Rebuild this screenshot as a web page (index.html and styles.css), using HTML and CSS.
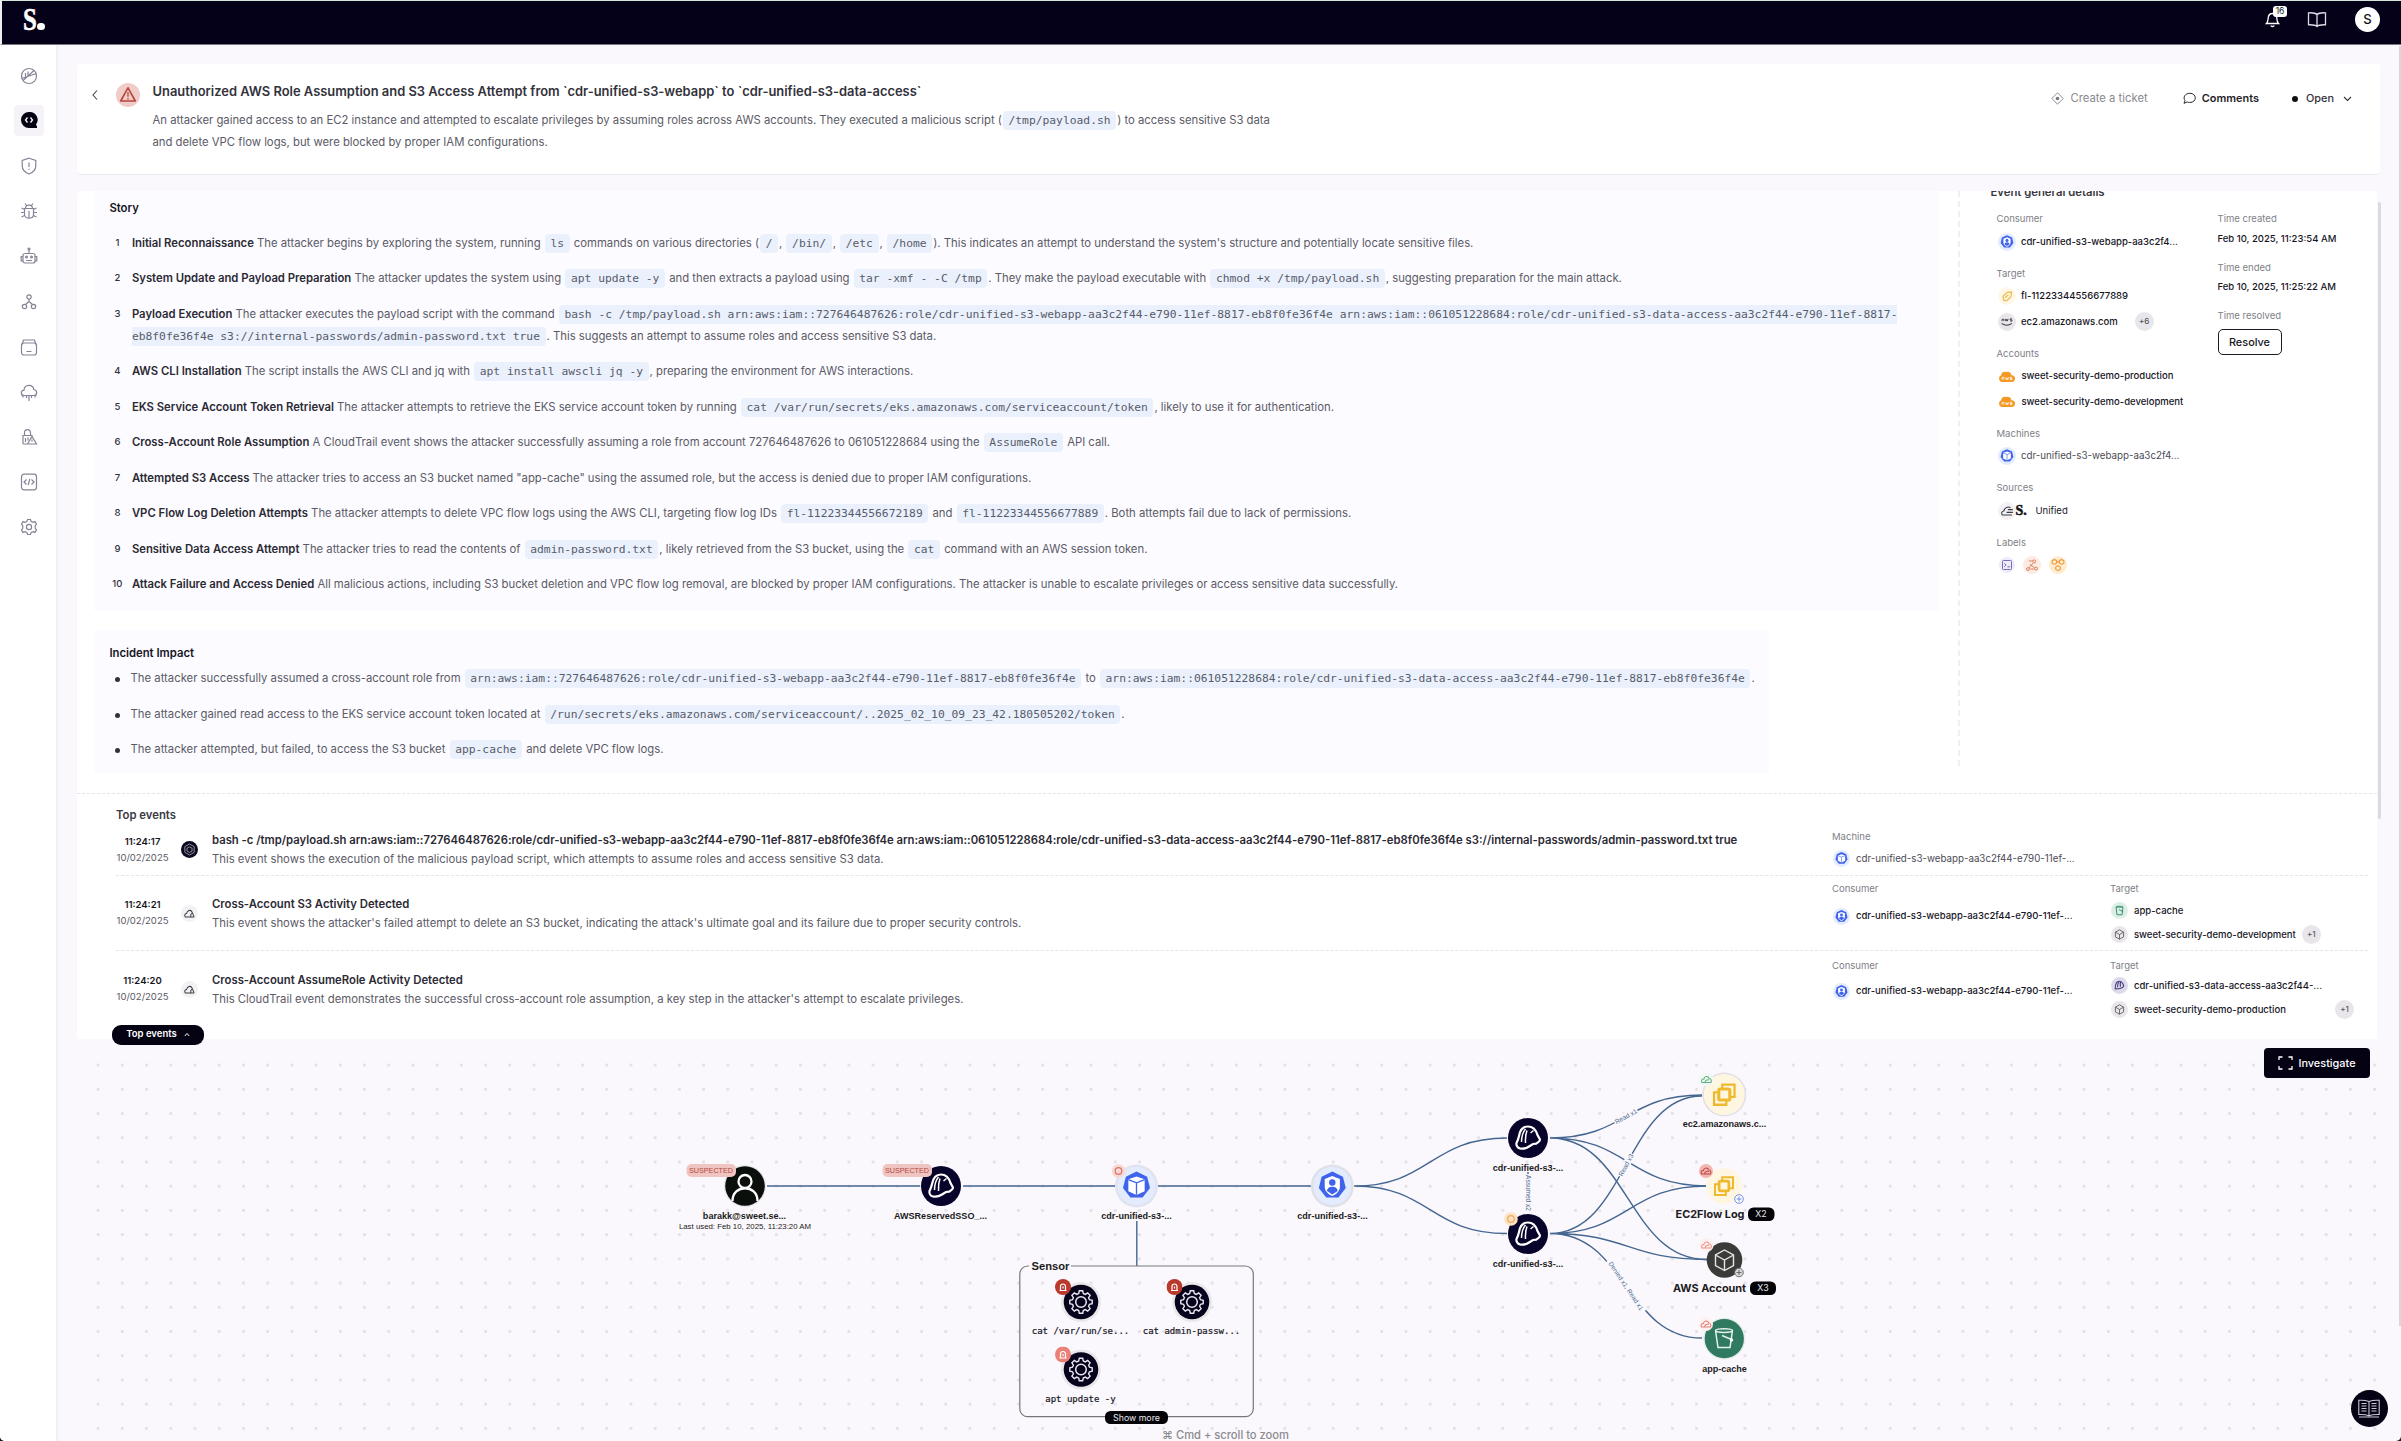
FILE: index.html
```html
<!DOCTYPE html>
<html lang="en">
<head>
<meta charset="utf-8">
<title>Sweet Security - Incident</title>
<link rel="stylesheet" href="styles.css">
</head>
<body>
<svg class="sprite" aria-hidden="true">
  <symbol id="i-user" viewBox="0 0 20 20"><circle cx="10" cy="10" r="10" fill="#e3ebff"/><path d="M10 2.400l5.600 2.700 1.500 6-3.900 5H6.800l-3.900-5 1.500-6z" fill="#3f63ea"/><path d="M10 4.800l4 1.500v4c0 2.500-1.800 4-4 5-2.200-1-4-2.500-4-5v-4z" fill="#fff"/><circle cx="10" cy="8.200" r="1.700" fill="#3f63ea"/><path d="M7.200 12.600c0-3 5.600-3 5.600 0L10 14.500z" fill="#3f63ea"/></symbol>
  <symbol id="i-pod" viewBox="0 0 20 20"><circle cx="10" cy="10" r="10" fill="#e3ebff"/><path d="M10 2.400l5.600 2.700 1.500 6-3.900 5H6.800l-3.900-5 1.500-6z" fill="#3f63ea"/><path d="M10 5l4.300 1.500v6.200L10 14.800l-4.300-2.100V6.500z" fill="#fff"/><path d="M5.700 6.700L10 8.300l4.300-1.600M10 8.300v6.300" fill="none" stroke="#3f63ea" stroke-width=".7"/></symbol>
  <symbol id="i-ec2" viewBox="0 0 20 20"><circle cx="10" cy="10" r="10" fill="#fff6e2"/><g fill="none" stroke="#efb92e" stroke-width="1.100"><rect x="7.300" y="7.300" width="5.400" height="5.400" rx=".8" stroke-width="1.500"/><path d="M9 7V5.200h6v6h-2M7 9H5v6h6v-2"/></g></symbol>
  <symbol id="i-tag" viewBox="0 0 20 20"><circle cx="10" cy="10" r="10" fill="#fff8e8"/><path d="M5.500 10.500l4.500-4.500 5-.5-.5 5-4.500 4.500-3.500 0z" fill="none" stroke="#ecc25c" stroke-width="1.600"/><path d="M8 12l3.500-3.500" stroke="#ecc25c" stroke-width="1.600"/></symbol>
  <symbol id="i-aws" viewBox="0 0 20 20"><circle cx="10" cy="10" r="10" fill="#e8e6ea"/><path d="M4.500 9V7h2v2M8 6.500l.8 2.500.8-2 .8 2 .8-2.500M15.500 6.500h-2v1.200h2V9h-2" fill="none" stroke="#3a3940" stroke-width="1"/><path d="M4 11.500c3.500 2.500 8 2.500 11.500 0" fill="none" stroke="#3a3940" stroke-width="1.200"/></symbol>
  <symbol id="i-cloud-aws" viewBox="0 0 20 12"><path d="M4 12a4 4 0 0 1-.5-7.500A4 4 0 0 1 9 1a5 5 0 0 1 6 3.500A3.800 3.800 0 0 1 16 12z" fill="#f39a26"/><path d="M4.500 9.500V7h2v2.500M8.500 7l.8 2.500.8-2 .8 2 .8-2.500M15.500 7h-2v1.200h2v1.300h-2" fill="none" stroke="#fff" stroke-width=".9"/></symbol>
  <symbol id="i-bucket" viewBox="0 0 20 20"><circle cx="10" cy="10" r="10" fill="#dcefe6"/><path d="M6 6h8l-1 9H7zM6 6c0-1.300 8-1.300 8 0M9.500 9l5 2.500" fill="none" stroke="#2f8a66" stroke-width="1.100"/></symbol>
  <symbol id="i-cube" viewBox="0 0 20 20"><circle cx="10" cy="10" r="10" fill="#e9e7ea"/><path d="M10 4.500l4.800 2.700v5.600L10 15.500l-4.800-2.700V7.200zM5.200 7.200L10 10l4.800-2.800M10 10v5.500" fill="none" stroke="#57565c" stroke-width="1"/></symbol>
  <symbol id="i-role" viewBox="0 0 20 20"><circle cx="10" cy="10" r="10" fill="#dddae9"/><path d="M5 14c0-4 1-9 4.500-9 3 0 4.500 2 5.500 5.500-1 2-3.500 3.500-10 3.500zM9 6c-1 2-1.300 4-1.300 6M11 5.500v6" fill="none" stroke="#4b4585" stroke-width="1.400"/></symbol>
  <symbol id="i-trail" viewBox="0 0 20 20"><circle cx="10" cy="10" r="10" fill="#f3f1f4"/><path d="M15.500 14H5c-1.500-2 0-4 1.500-4C7.500 6 11 5.500 12.500 7.500l3 6.500M11.500 14c-.5-2 0-3.500 1.500-4.500" fill="none" stroke="#3d3c42" stroke-width="1.200"/></symbol>
  <symbol id="i-source" viewBox="0 0 20 20"><circle cx="10" cy="10" r="10" fill="#f3f1f4"/><path d="M15.500 14.500H5c-2-2-.500-4.500 1.500-4.500C7.500 6 11 4.500 14 6.500M16.500 8.500H11M16.500 11.500H9.500" fill="none" stroke="#3d3c42" stroke-width="1.200"/></symbol>
  <symbol id="i-badge-cloud" viewBox="0 0 16 16"><path d="M3 11.500c-1.500-2 0-4.500 2-4C5.500 4 10 3.500 11 6.800c2.300 0 3.300 2.700 2 4.700zM6.500 11c0-2 2-3 4.500-2.500" fill="none" stroke="currentColor" stroke-width="1.200"/></symbol>
  <symbol id="i-hat" viewBox="0 0 40 40"><circle cx="20" cy="20" r="20" fill="#07032a"/><path d="M8.500 25c1-2 2-4.500 2.500-7C12 12.500 15 8.500 20 8.500c5.500 0 8 3.500 9.500 8.500l2.500 4.500c0 1.500-2 3-4 4.200l-3 .3-4 2.500c-3 2-6 2.500-9 2-2.500-.500-4-3-3.500-5.500z" fill="none" stroke="#fff" stroke-width="2.200"/><path d="M13.500 24c0-6 1.500-10 4-13M17.500 25c-.3-5 .2-9 1.500-12.500M22.500 15l3-2.500" fill="none" stroke="#fff" stroke-width="1.500"/></symbol>
  <symbol id="i-gearnode" viewBox="0 0 40 40"><circle cx="20" cy="20" r="20" fill="#e9e7ea"/><circle cx="20" cy="20" r="17.300" fill="#07031c"/><g fill="none" stroke="#e8e8f0"><circle cx="20" cy="20" r="5.300" stroke-width="1.500"/><path d="M18.300 10h3.400l.6 2.700 2 .9 2.400-1.500 2.400 2.400-1.500 2.400.9 2 2.700.6v3.400l-2.700.6-.9 2 1.500 2.400-2.400 2.400-2.400-1.500-2 .9-.6 2.700h-3.400l-.6-2.700-2-.9-2.400 1.500-2.400-2.400 1.500-2.400-.9-2-2.700-.6v-3.400l2.700-.6.9-2-1.500-2.400 2.400-2.400 2.400 1.500 2-.9z" stroke-width="1.400" transform="translate(0 -1.200)"/></g></symbol>
  <symbol id="i-alarm" viewBox="0 0 16 16"><circle cx="8" cy="8" r="8" fill="currentColor"/><path d="M4.500 11.500h7M5.500 11V7.500a2.500 2.500 0 0 1 5 0V11M8 7.500v2" fill="none" stroke="#fff" stroke-width="1.200"/></symbol>
</svg>

<div class="app">
  <header class="topbar">
    <div class="logo"><span class="logo-s">S</span><i class="logo-dot"></i></div>
    <div class="topbar-actions">
      <div class="bell">
        <svg width="15" height="17" viewBox="0 0 15 17" fill="none" stroke="#fff" stroke-width="1.300"><path d="M1.500 12.500c1.500-1.500 1.500-3 1.700-5.500C3.400 4 5 2.500 7.500 2.500S11.600 4 11.800 7c.2 2.500.2 4 1.700 5.500zM5.800 14.500c.5 1.300 2.900 1.300 3.400 0"/></svg>
        <span class="bell-count">16</span>
      </div>
      <svg width="20" height="17" viewBox="0 0 20 17" fill="none" stroke="#dcdce4" stroke-width="1.300"><path d="M10 3.500C8.500 2 6 1.500 1.500 1.800v12c4.500-.2 7 .2 8.500 1.700 1.500-1.500 4-1.900 8.500-1.700v-12C14 1.500 11.500 2 10 3.500zM10 3.500v12"/></svg>
      <div class="avatar">S</div>
    </div>
  </header>

  <div class="shell">
    <nav class="sidebar">
      <a class="nav-item"><svg viewBox="0 0 18 18"><circle cx="9" cy="9" r="7.500"/><path d="M1.500 11.500L16.500 6.500M3 13.500L14 3.500M5.500 6v3.500M8 4.500v3.800"/></svg></a>
      <a class="nav-item active"><span class="nav-tile"><svg viewBox="0 0 18 18"><path d="M9 1a7.800 7.800 0 1 0 0 16h8v-1.500l-1-2A7.800 7.800 0 0 0 9 1z" fill="#050214" stroke="none"/><path d="M7.500 6.500L5.500 9l2 2.500M10.500 6.500l2 2.500-2 2.500" stroke="#fff" stroke-width="1.300"/></svg></span></a>
      <a class="nav-item"><svg viewBox="0 0 18 18"><path d="M9 1.200l6.800 2.300v5.300c0 4-2.800 6.700-6.800 8.200-4-1.500-6.800-4.200-6.800-8.200V3.500zM9 5.500v4.500M9 11.800v1.200"/></svg></a>
      <a class="nav-item"><svg viewBox="0 0 18 18"><path d="M4.500 6.500h9v6c0 5-9 5-9 0zM5.500 6.500c0-4.500 7-4.500 7 0M9 9v7M1.500 6l3 1.500M16.500 6l-3 1.500M1 10.500h3.500M17 10.500h-3.500M1.500 15l3-1.500M16.500 15l-3-1.500M5 1.500l1.500 2M13 1.500l-1.500 2"/></svg></a>
      <a class="nav-item"><svg viewBox="0 0 18 18"><rect x="3" y="6.500" width="12" height="9.500" rx="2"/><path d="M9 6.500V2.500M3 9.500H1.200V14H3M15 9.500h1.800V14H15M6 13.500h6"/><circle cx="9" cy="2" r="1"/><circle cx="6.500" cy="10" r=".9"/><circle cx="11.500" cy="10" r=".9"/></svg></a>
      <a class="nav-item"><svg viewBox="0 0 18 18"><circle cx="9" cy="4" r="2.200"/><circle cx="4.500" cy="13.500" r="2.200"/><circle cx="13.500" cy="13.500" r="2.200"/><path d="M9 6.200v2.300L5.500 11.500M9 8.500l3.500 3"/></svg></a>
      <a class="nav-item"><svg viewBox="0 0 18 18"><rect x="1.500" y="5" width="15" height="12" rx="2.500"/><path d="M2 6.500L3.500 2h11L16 6.500M6.500 13.500h5"/></svg></a>
      <a class="nav-item"><svg viewBox="0 0 18 18"><path d="M4 12.500C.5 12 .5 7.500 4 7.200 4.500 1 13 1 13.700 6.500c4 .5 3.800 5.500.3 6M1.500 12.500h15M3 12.500v2M6.500 12.500V15M9 12.500V18M11.500 12.500V15M15 12.500v2" /></svg></a>
      <a class="nav-item"><svg viewBox="0 0 18 18"><path d="M3 16V7.500h9V10M4.500 7.500V5c0-4.500 6-4.500 6 0v2.500M3 16h13.500L12 8.500 7.500 16M12 11.500v2M5.500 10v4M8 9.500v3" /></svg></a>
      <a class="nav-item"><svg viewBox="0 0 18 18"><rect x="1.500" y="1.200" width="15" height="15.600" rx="2.500"/><path d="M6.500 6.500L4 9l2.500 2.500M11.500 6.500L14 9l-2.500 2.500M9.800 6L8.200 12"/></svg></a>
      <a class="nav-item"><svg viewBox="0 0 18 18"><circle cx="9" cy="9" r="2.600"/><path d="M7.500 1.500h3l.6 2 2 .8L15 3.600l1.500 2.600-1.300 1.500v2.600l1.300 1.500L15 14.400l-1.900-.7-2 .8-.6 2h-3l-.6-2-2-.8-1.900.7-1.500-2.600 1.300-1.500V7.700L1.500 6.200 3 3.600l1.900.7 2-.8z"/></svg></a>
    </nav>

    <main class="main">
      <section class="incident-head">
        <svg class="back" viewBox="0 0 8 12"><path d="M6 1.500L2 6l4 4.500" fill="none" stroke="#444" stroke-width="1.100"/></svg>
        <svg class="severity" viewBox="0 0 24 24"><circle cx="12" cy="12" r="12" fill="#f0cbc8"/><path d="M12 4.800l7.300 13.200H4.700z" fill="none" stroke="#b5473b" stroke-width="1.600" stroke-linejoin="round"/><path d="M12 9.300v4.500M12 15v1.400" stroke="#b5473b" stroke-width="1.300"/></svg>
        <div class="incident-text">
          <h1>Unauthorized AWS Role Assumption and S3 Access Attempt from `cdr-unified-s3-webapp` to `cdr-unified-s3-data-access`</h1>
          <p>An attacker gained access to an EC2 instance and attempted to escalate privileges by assuming roles across AWS accounts. They executed a malicious script (<code>/tmp/payload.sh</code>) to access sensitive S3 data<br>and delete VPC flow logs, but were blocked by proper IAM configurations.</p>
        </div>
        <div class="incident-actions">
          <span class="act muted"><svg width="13" height="13" viewBox="0 0 13 13"><path d="M6.500.8l5.700 5.700-5.700 5.700L.8 6.500z" fill="none" stroke="#8d8c93" stroke-width="1"/><circle cx="6.500" cy="6.500" r="1.800" fill="#77767d"/></svg>Create a ticket</span>
          <span class="act strong"><svg width="13" height="13" viewBox="0 0 13 13"><path d="M6.800 1.300c7.300 0 7.300 9.200 0 9.200-1 0-1.800-.2-2.600-.5L1 11.300 2 8.500C-.3 5.500 2 1.300 6.800 1.300z" fill="none" stroke="#2b2a33" stroke-width="1"/></svg>Comments</span>
          <span class="act status"><i class="status-dot"></i>Open<svg width="9" height="6" viewBox="0 0 9 6"><path d="M1 1l3.500 3.500L8 1" fill="none" stroke="#333" stroke-width="1.100"/></svg></span>
        </div>
      </section>

      <section class="panel">
        <div class="panel-top">
          <div class="narrative">
            <article class="story">
              <h2>Story</h2>
              <ol>
                <li><i>1</i><p><b>Initial Reconnaissance</b> The attacker begins by exploring the system, running <code>ls</code> commands on various directories (<code>/</code>, <code>/bin/</code>, <code>/etc</code>, <code>/home</code>). This indicates an attempt to understand the system's structure and potentially locate sensitive files.</p></li>
                <li><i>2</i><p><b>System Update and Payload Preparation</b> The attacker updates the system using <code>apt update -y</code> and then extracts a payload using <code>tar -xmf - -C /tmp</code>. They make the payload executable with <code>chmod +x /tmp/payload.sh</code>, suggesting preparation for the main attack.</p></li>
                <li><i>3</i><p><b>Payload Execution</b> The attacker executes the payload script with the command <code>bash -c /tmp/payload.sh arn:aws:iam::727646487626:role/cdr-unified-s3-webapp-aa3c2f44-e790-11ef-8817-eb8f0fe36f4e arn:aws:iam::061051228684:role/cdr-unified-s3-data-access-aa3c2f44-e790-11ef-8817-<wbr>eb8f0fe36f4e s3://internal-passwords/admin-password.txt true</code>. This suggests an attempt to assume roles and access sensitive S3 data.</p></li>
                <li><i>4</i><p><b>AWS CLI Installation</b> The script installs the AWS CLI and jq with <code>apt install awscli jq -y</code>, preparing the environment for AWS interactions.</p></li>
                <li><i>5</i><p><b>EKS Service Account Token Retrieval</b> The attacker attempts to retrieve the EKS service account token by running <code>cat /var/run/secrets/eks.amazonaws.com/serviceaccount/token</code>, likely to use it for authentication.</p></li>
                <li><i>6</i><p><b>Cross-Account Role Assumption</b> A CloudTrail event shows the attacker successfully assuming a role from account 727646487626 to 061051228684 using the <code>AssumeRole</code> API call.</p></li>
                <li><i>7</i><p><b>Attempted S3 Access</b> The attacker tries to access an S3 bucket named "app-cache" using the assumed role, but the access is denied due to proper IAM configurations.</p></li>
                <li><i>8</i><p><b>VPC Flow Log Deletion Attempts</b> The attacker attempts to delete VPC flow logs using the AWS CLI, targeting flow log IDs <code>fl-11223344556672189</code> and <code>fl-11223344556677889</code>. Both attempts fail due to lack of permissions.</p></li>
                <li><i>9</i><p><b>Sensitive Data Access Attempt</b> The attacker tries to read the contents of <code>admin-password.txt</code>, likely retrieved from the S3 bucket, using the <code>cat</code> command with an AWS session token.</p></li>
                <li><i>10</i><p><b>Attack Failure and Access Denied</b> All malicious actions, including S3 bucket deletion and VPC flow log removal, are blocked by proper IAM configurations. The attacker is unable to escalate privileges or access sensitive data successfully.</p></li>
              </ol>
            </article>
            <article class="impact">
              <h2>Incident Impact</h2>
              <ul>
                <li>The attacker successfully assumed a cross-account role from <code>arn:aws:iam::727646487626:role/cdr-unified-s3-webapp-aa3c2f44-e790-11ef-8817-eb8f0fe36f4e</code> to <code>arn:aws:iam::061051228684:role/cdr-unified-s3-data-access-aa3c2f44-e790-11ef-8817-eb8f0fe36f4e</code>.</li>
                <li>The attacker gained read access to the EKS service account token located at <code>/run/secrets/eks.amazonaws.com/serviceaccount/..2025_02_10_09_23_42.180505202/token</code>.</li>
                <li>The attacker attempted, but failed, to access the S3 bucket <code>app-cache</code> and delete VPC flow logs.</li>
              </ul>
            </article>
          </div>

          <aside class="details">
            <h2>Event general details</h2>
            <div class="details-cols">
              <div class="fields">
                <div class="field"><label>Consumer</label><span class="val"><svg><use href="#i-user"/></svg>cdr-unified-s3-webapp-aa3c2f4...</span></div>
                <div class="field"><label>Target</label><span class="val"><svg><use href="#i-tag"/></svg>fl-11223344556677889</span><span class="val"><svg><use href="#i-aws"/></svg>ec2.amazonaws.com<em class="more wide">+6</em></span></div>
                <div class="field"><label>Accounts</label><span class="val"><svg class="cloud"><use href="#i-cloud-aws"/></svg>sweet-security-demo-production</span><span class="val"><svg class="cloud"><use href="#i-cloud-aws"/></svg>sweet-security-demo-development</span></div>
                <div class="field"><label>Machines</label><span class="val soft"><svg><use href="#i-pod"/></svg>cdr-unified-s3-webapp-aa3c2f4...</span></div>
                <div class="field"><label>Sources</label><span class="val sources"><svg><use href="#i-source"/></svg><b class="mini-logo">S.</b>Unified</span></div>
                <div class="field"><label>Labels</label><span class="val labels">
                  <svg viewBox="0 0 20 20"><circle cx="10" cy="10" r="9" fill="#eeecfa"/><rect x="5" y="5" width="10" height="10" rx="1" fill="none" stroke="#6a62ae"/><path d="M7 8l2 2-2 2M10.500 12h3" fill="none" stroke="#6a62ae"/></svg>
                  <svg viewBox="0 0 20 20"><circle cx="10" cy="10" r="10" fill="#fdeae2"/><g fill="none" stroke="#d77a55"><circle cx="5.500" cy="14.500" r="1.600"/><circle cx="14.500" cy="14" r="1.600"/><circle cx="12.500" cy="6" r="1.600"/><path d="M6.500 13.500l5-6M6.500 5.500H11M7.500 9.500l5.500 3.500M8 14.500h4.500"/></g></svg>
                  <svg viewBox="0 0 20 20"><circle cx="10" cy="10" r="10" fill="#ffeccf"/><g fill="none" stroke="#eb9a3a" stroke-width="1.200"><path d="M6 3.800l2.500 1.400v2.700L6 9.300 3.500 7.900V5.200zM14 3.800l2.500 1.400v2.700L14 9.300l-2.500-1.400V5.200zM10 10.800l2.500 1.400v2.700L10 16.300l-2.500-1.400v-2.700zM8.500 6.500h3"/></g></svg>
                </span></div>
              </div>
              <div class="times">
                <label>Time created</label><span>Feb 10, 2025, 11:23:54 AM</span>
                <label>Time ended</label><span>Feb 10, 2025, 11:25:22 AM</span>
                <label>Time resolved</label><button class="resolve">Resolve</button>
              </div>
            </div>
          </aside>
          <i class="scroll-thumb"></i>
        </div>

        <div class="events">
          <h2>Top events</h2>
          <div class="event first">
            <div class="when"><b>11:24:17</b><span>10/02/2025</span></div>
            <svg class="ev-icon" viewBox="0 0 20 20"><circle cx="10" cy="10" r="10" fill="#0d0a22"/><path d="M10 3.500l5.500 3.200v6.600L10 16.500l-5.500-3.200V6.700zM10 7l3 1.500v3.300L10 13.500l-3-1.700V8.500z" fill="none" stroke="#a5a4b0" stroke-width="1"/></svg>
            <div class="what"><b>bash -c /tmp/payload.sh arn:aws:iam::727646487626:role/cdr-unified-s3-webapp-aa3c2f44-e790-11ef-8817-eb8f0fe36f4e arn:aws:iam::061051228684:role/cdr-unified-s3-data-access-aa3c2f44-e790-11ef-8817-eb8f0fe36f4e s3://internal-passwords/admin-password.txt true</b><span>This event shows the execution of the malicious payload script, which attempts to assume roles and access sensitive S3 data.</span></div>
            <div class="who"><label>Machine</label><span class="val soft"><svg><use href="#i-pod"/></svg>cdr-unified-s3-webapp-aa3c2f44-e790-11ef-...</span></div>
            <div class="who"></div>
          </div>
          <div class="event">
            <div class="when"><b>11:24:21</b><span>10/02/2025</span></div>
            <svg class="ev-icon"><use href="#i-trail"/></svg>
            <div class="what"><b>Cross-Account S3 Activity Detected</b><span>This event shows the attacker's failed attempt to delete an S3 bucket, indicating the attack's ultimate goal and its failure due to proper security controls.</span></div>
            <div class="who consumer"><label>Consumer</label><span class="val"><svg><use href="#i-user"/></svg>cdr-unified-s3-webapp-aa3c2f44-e790-11ef-...</span></div>
            <div class="who"><label>Target</label><span class="val"><svg><use href="#i-bucket"/></svg>app-cache</span><span class="val"><svg><use href="#i-cube"/></svg>sweet-security-demo-development<em class="more">+1</em></span></div>
          </div>
          <div class="event last">
            <div class="when"><b>11:24:20</b><span>10/02/2025</span></div>
            <svg class="ev-icon"><use href="#i-trail"/></svg>
            <div class="what"><b>Cross-Account AssumeRole Activity Detected</b><span>This CloudTrail event demonstrates the successful cross-account role assumption, a key step in the attacker's attempt to escalate privileges.</span></div>
            <div class="who consumer"><label>Consumer</label><span class="val"><svg><use href="#i-user"/></svg>cdr-unified-s3-webapp-aa3c2f44-e790-11ef-...</span></div>
            <div class="who"><label>Target</label><span class="val"><svg><use href="#i-role"/></svg>cdr-unified-s3-data-access-aa3c2f44-...</span><span class="val"><svg><use href="#i-cube"/></svg>sweet-security-demo-production<em class="more far">+1</em></span></div>
          </div>
          <button class="toggle">Top events<svg width="6" height="5" viewBox="0 0 6 5"><path d="M.8 4L3 1.500 5.200 4" fill="none" stroke="#fff"/></svg></button>
        </div>
      </section>

      <section class="graph">
        <svg class="graph-canvas" viewBox="58 1039 2343 402">
          <g class="edges">
            <path d="M767 1186H920M963 1186H1115M1158 1186H1311" stroke-width="2"/>
            <path d="M1136.800 1221V1266" stroke-width="1.600"/>
            <path d="M1354 1186C1430 1186 1430 1138 1507 1138M1354 1186C1430 1186 1430 1233.500 1507 1233.500"/>
            <path d="M1550 1138C1626 1138 1626 1095 1702 1095M1550 1138C1628 1138 1628 1186 1707 1186M1550 1138C1628 1138 1628 1259.500 1707 1259.500"/>
            <path d="M1550 1233.500C1626 1233.500 1626 1096 1702 1096M1550 1233.500C1628 1233.500 1628 1186 1707 1186M1550 1233.500C1628 1233.500 1628 1259.500 1707 1259.500M1550 1233.500C1626 1233.500 1626 1338 1702 1338"/>
            <path d="M1528 1172V1212"/>
          </g>
          <g class="edge-labels">
            <g transform="translate(1626 1116.500) rotate(-29)"><rect x="-13" y="-4" width="26" height="8"/><text y="2.200">Read x1</text></g>
            <g transform="translate(1626 1165) rotate(-62)"><rect x="-13" y="-4" width="26" height="8"/><text y="2.200">Read x3</text></g>
            <g transform="translate(1528 1193) rotate(90)"><rect x="-19" y="-4" width="38" height="8"/><text y="2.200">Assumed x2</text></g>
            <g transform="translate(1626 1286) rotate(56)"><rect x="-31" y="-4" width="62" height="8"/><text y="2.200">Denied x1, Read x1</text></g>
          </g>

          <g>
            <circle cx="745" cy="1186" r="21" fill="#e6e4e8"/><circle cx="745" cy="1186" r="19.800" fill="#0b0f0b"/>
            <g fill="none" stroke="#fff" stroke-width="2.300"><circle cx="745" cy="1181.500" r="6.500"/><path d="M732.500 1201c0-17 25-17 25 0"/></g>
            <use href="#i-hat" x="921" y="1166" width="40" height="40"/>
            <circle cx="1136.500" cy="1186" r="21.500" fill="#e1e3ee"/><use href="#i-pod" x="1117.500" y="1167" width="38" height="38"/>
            <circle cx="1332.300" cy="1186" r="21.500" fill="#dfe1e8"/><use href="#i-user" x="1313.300" y="1167" width="38" height="38"/>
            <use href="#i-hat" x="1508" y="1118" width="40" height="40"/>
            <use href="#i-hat" x="1508" y="1214" width="40" height="40"/>
            <circle cx="1724.300" cy="1094.500" r="22" fill="#e2e0e6"/><use href="#i-ec2" x="1703.800" y="1074" width="41" height="41"/>
            <use href="#i-ec2" x="1706" y="1168" width="36" height="36"/>
            <circle cx="1724.500" cy="1260" r="17.800" fill="#3b3b39"/><path d="M1724.500 1250l9 5v10.500l-9 5-9-5V1255zM1715.500 1255l9 5 9-5M1724.500 1260v10.500" fill="none" stroke="#e6e6e6" stroke-width="1.400"/>
            <circle cx="1724.300" cy="1338.700" r="21" fill="#e3ece8"/><circle cx="1724.300" cy="1338.700" r="19.600" fill="#2f7a60"/><path d="M1715.500 1330.500l2.500 17h12l2.500-17M1715.500 1330.500c0-2.500 17-2.500 17 0s-17 2.500-17 0M1722 1335.500l9.500 4" fill="none" stroke="#e3f2ec" stroke-width="1.500"/>
            <circle cx="1731.500" cy="1340" r="1.700" fill="#fff"/>
          </g>

          <g class="tag"><rect x="686.500" y="1164" width="49.500" height="13" rx="5"/><text x="711" y="1173.300">SUSPECTED</text></g>
          <g class="tag"><rect x="882.500" y="1164" width="49.500" height="13" rx="5"/><text x="907" y="1173.300">SUSPECTED</text></g>
          <circle cx="1118.500" cy="1171" r="6.800" fill="#f7d8d4"/><circle cx="1118.500" cy="1171" r="3.300" fill="none" stroke="#d8776c" stroke-width="1.300"/>
          <circle cx="1511" cy="1219" r="6.800" fill="#fde3c4"/><circle cx="1511" cy="1219" r="3.300" fill="none" stroke="#efac5c" stroke-width="1.300"/>
          <circle cx="1706.500" cy="1079.500" r="7" fill="#eff8f2"/><use href="#i-badge-cloud" x="1699.500" y="1072.500" width="14" height="14" color="#5fae7e"/>
          <circle cx="1706" cy="1171" r="7" fill="#f1b5b2"/><use href="#i-badge-cloud" x="1699" y="1164" width="14" height="14" color="#c2453f"/>
          <circle cx="1706.500" cy="1245" r="7" fill="#fdf0ef"/><use href="#i-badge-cloud" x="1699.500" y="1238" width="14" height="14" color="#ee9089"/>
          <circle cx="1706" cy="1324" r="7" fill="#fdf0ef"/><use href="#i-badge-cloud" x="1699" y="1317" width="14" height="14" color="#e5807a"/>
          <g fill="#fff" stroke="#6f8ce6"><circle cx="1739" cy="1199" r="4.300"/><path d="M1739 1196.500v5M1736.500 1199h5"/></g>
          <g fill="#d9d9d9" stroke="#6c6c6c"><circle cx="1739" cy="1272.500" r="4.300"/><path d="M1739 1270v5M1736.500 1272.500h5"/></g>

          <g class="node-labels">
            <text x="744.500" y="1218.500">barakk@sweet.se...</text>
            <text x="745" y="1229" class="small">Last used: Feb 10, 2025, 11:23:20 AM</text>
            <text x="940.500" y="1218.500">AWSReservedSSO_...</text>
            <text x="1136.500" y="1218.500">cdr-unified-s3-...</text>
            <text x="1332.500" y="1218.500">cdr-unified-s3-...</text>
            <text x="1528" y="1170.500">cdr-unified-s3-...</text>
            <text x="1528" y="1266.500">cdr-unified-s3-...</text>
            <text x="1724.500" y="1126.500">ec2.amazonaws.c...</text>
            <text x="1724.500" y="1371.500">app-cache</text>
            <text x="1710" y="1217.500" class="group">EC2Flow Log</text>
            <text x="1709.500" y="1292" class="group">AWS Account</text>
          </g>
          <g class="pill"><rect x="1748" y="1207.500" width="26.500" height="13.500" rx="5.500"/><text x="1761" y="1217">X2</text>
            <rect x="1750" y="1281.500" width="26" height="13.500" rx="5.500"/><text x="1763" y="1291">X3</text></g>

          <rect x="1019.800" y="1266" width="233.500" height="150.700" rx="8" fill="none" stroke="#77767b" stroke-width="1.200"/>
          <rect x="1029" y="1262" width="42" height="8" fill="#faf8fc"/>
          <text x="1031.500" y="1270" class="box-title">Sensor</text>
          <use href="#i-gearnode" x="1061" y="1282" width="40" height="40"/><use href="#i-gearnode" x="1172" y="1282" width="40" height="40"/><use href="#i-gearnode" x="1061" y="1349.500" width="40" height="40"/>
          <use href="#i-alarm" x="1055" y="1279" width="16" height="16" color="#b93a2c"/><use href="#i-alarm" x="1166.500" y="1279" width="16" height="16" color="#b93a2c"/><use href="#i-alarm" x="1055" y="1346.500" width="16" height="16" color="#ea8077"/>
          <g class="mono-labels"><text x="1080.500" y="1334">cat /var/run/se...</text><text x="1191.500" y="1334">cat admin-passw...</text><text x="1080.500" y="1401.500">apt update -y</text></g>
          <g class="pill"><rect x="1105" y="1411" width="63" height="13" rx="5.500"/><text x="1136.500" y="1421">Show more</text></g>
          <text x="1162" y="1438.500" class="hint">⌘ Cmd + scroll to zoom</text>
        </svg>
        <button class="investigate"><svg width="15" height="14" viewBox="0 0 15 14"><path d="M1 4V1h3.500M10.500 1H14v3M14 10v3h-3.500M4.500 13H1v-3" fill="none" stroke="#fff" stroke-width="1.300"/></svg>Investigate</button>
        <button class="help"><svg width="22" height="19" viewBox="0 0 22 19" fill="none" stroke="#c9c8d6" stroke-width="1.100"><path d="M11 2.500C8 1.300 5 1 .8 1.300v14.200c4-.2 7 0 10.200 1.200 3.200-1.200 6.200-1.400 10.200-1.200V1.300C17 1 14 1.300 11 2.500zM11 2.500v14M3.500 4.500h5M3.500 7h5M3.500 9.500h5M3.500 12h5M13.500 4.500h5M13.500 7h5M13.500 9.500h5M13.500 12h5M1 18h20"/></svg></button>
      </section>
      <i class="page-scroll"></i>
    </main>
  </div>
</div>
</body>
</html>
```
FILE: styles.css
```css
* { box-sizing: border-box; margin: 0; padding: 0; }
html, body { height: 100%; }
body { background: #1c1b20; font: 11.3px/22.2px Inter, "Open Sans", sans-serif; color: #5b5a66; }
ol, ul { list-style: none; }
i, em { font-style: normal; }
button { font: inherit; border: 0; }
svg { flex: none; display: block; }
.sprite { position: absolute; width: 0; height: 0; }

.app { width: 2401px; height: 1441px; display: flex; flex-direction: column; background: #faf8fc; border-radius: 0 0 5px 5px; overflow: hidden; }

.topbar { height: 45px; border-top: 1px solid #d9e6e0; border-left: 2px solid #eef0f0; border-bottom: 1px solid #77767c; background: #040118; display: flex; justify-content: space-between; padding: 0 21px 0 21px; }
.logo { display: flex; align-items: flex-end; height: 30px; }
.logo-s { font: bold 31px/31px "Liberation Serif", serif; color: #fff; width: 14px; transform: scaleX(.8); transform-origin: 0 50%; position: relative; top: 4px; -webkit-text-stroke: .6px #fff; }
.logo-dot { width: 7.500px; height: 7.500px; border-radius: 50%; background: #fff; margin: 0 0 1px 0; }
.topbar-actions { display: flex; align-items: center; height: 37px; gap: 25px; }
.topbar-actions > svg { margin-left: 2px; margin-right: 3px; }
.bell { position: relative; }
.bell-count { position: absolute; left: 8px; top: -5px; background: #fff; color: #222; font-size: 8.500px; line-height: 11px; width: 14px; text-align: center; border-radius: 3px; }
.avatar { width: 25px; height: 25px; border-radius: 50%; background: #fff; color: #111; font-size: 13px; font-weight: 500; line-height: 25px; text-align: center; }

.shell { flex: 1; display: flex; min-height: 0; }
.sidebar { width: 58px; background: #fff; border-right: 2px solid #f1eff5; padding: 8px 0 0 1px; }
.nav-item { height: 45.200px; display: flex; align-items: center; justify-content: center; }
.nav-item svg { width: 18px; height: 18px; fill: none; stroke: #858496; stroke-width: 1.200; }
.nav-tile { width: 30px; height: 31px; border-radius: 4px; background: #f5f3f7; display: flex; align-items: center; justify-content: center; }
.active { padding-bottom: 1.500px; }

.main { flex: 1; display: flex; flex-direction: column; position: relative; }

.incident-head { margin: 19px 21px 0 19px; height: 110.500px; background: #fff; border-bottom: 1px solid #ebe9ee; border-radius: 4px; display: flex; padding: 16px 0 0 13px; }
.back { width: 8px; height: 12px; margin: 9px 15px 0 1px; }
.severity { width: 24px; height: 24px; margin: 3px 12.500px 0 2px; }
.incident-text { flex: 1; }
.incident-text h1 { font-size: 12.920px; font-weight: 600; line-height: 22px; color: #33323b; }
.incident-text p { line-height: 21.700px; margin-top: 8px; }
.incident-actions { display: flex; align-items: center; height: 22px; margin-top: 7.500px; padding-right: 29px; color: #33323b; }
.act { display: flex; align-items: center; gap: 6px; }
.muted { color: #8a8990; }
.strong { font-size: 10.920px; font-weight: 600; color: #1f1e28; margin-left: 35px; }
.status { font-size: 10.920px; font-weight: 500; margin-left: 33px; gap: 8px; }
.status-dot { width: 6px; height: 6px; border-radius: 50%; background: #111; }
.status svg { margin-left: 1px; margin-right: -1px; }

code { font: 11.300px/1 "DejaVu Sans Mono", monospace; color: #575c6b; background: #ebf1fc; padding: 3px 5.600px; margin: 0 1px; border-radius: 4px; }

.panel { margin: 16.500px 24px 0 19px; height: 848px; background: #fff; border-radius: 4px 4px 0 0; flex: none; position: relative; z-index: 1; }
.panel-top { height: 602.500px; border-bottom: 1px dashed #e6e3ea; display: flex; justify-content: space-between; position: relative; }
.narrative { padding-left: 17px; display: flex; flex-direction: column; gap: 19px; }
h2 { font-size: 11.300px; font-weight: 600; color: #16151f; }
.story { width: 1845px; height: 420px; background: #fcfbff; padding: 5.500px 35px 0 15.400px; }
.story ol { padding-top: 13.200px; display: flex; flex-direction: column; gap: 13.250px; }
.story li { display: flex; gap: 6.500px; }
.story li i { flex: none; width: 16px; text-align: center; font-size: 9.500px; font-weight: 500; color: #33323b; }
.story b { font-weight: 600; color: #2b2a34; }
.impact { width: 1675px; height: 143px; background: #fcfbff; padding: 12px 0 0 15.400px; }
.impact ul { padding-top: 3px; display: flex; flex-direction: column; gap: 13.400px; }
.impact li { padding-left: 21.200px; position: relative; }
.impact li::before { content: ""; position: absolute; left: 6px; top: 10px; width: 5px; height: 5px; border-radius: 50%; background: #33323b; }

.details { width: 419.500px; height: 575px; border-left: 2px dashed #f0eef2; overflow: hidden; padding-left: 31px; line-height: 14px; font-size: 9.530px; }
.details h2 { line-height: 14px; margin: -6.400px 0 13.800px; color: #3a3942; }
.details-cols { display: flex; padding-left: 6px; }
.fields { width: 221px; display: flex; flex-direction: column; gap: 12.250px; }
.field { display: flex; flex-direction: column; }
.field label { margin-bottom: 2.750px; }
label { color: #807f88; font-size: 9.530px; line-height: 14px; }
.val { display: flex; align-items: center; height: 25.500px; font-size: 9.530px; font-weight: 500; color: #17161f; white-space: nowrap; }
.val svg { width: 18px; height: 18px; margin: 0 5.500px 0 1px; }
.details .cloud { height: 11px; margin-right: 6px; }
.soft { font-weight: 400; color: #4b4a55; }
.details .soft, .first .soft { font-size: 9.750px; }
.more { height: 19px; min-width: 19px; border-radius: 10px; background: #e8e6ea; color: #55545e; font-size: 8px; font-weight: 500; line-height: 19px; text-align: center; margin-left: 6px; }
.more.wide { margin-left: 17px; }
.more.far { margin-left: 49px; }
.details .sources { font-weight: 400; color: #17161f; }
.details .sources svg { margin: 0 0 0 1px; }
.mini-logo { font: bold 14px/16px "Liberation Serif", serif; color: #111; width: 20px; -webkit-text-stroke: .5px #111; }
.details .labels svg { margin: 0 6.500px 0 1px; }
.times { display: flex; flex-direction: column; align-items: flex-start; }
.times span { color: #17161f; font-weight: 500; margin: 5.500px 0 15px; }
.resolve { margin-top: 5.800px; width: 64px; height: 25.500px; border: 1.500px solid #1a1924; border-radius: 5px; background: #fff; font-size: 10.920px; font-weight: 500; color: #17161f; }
.scroll-thumb { position: absolute; right: -4px; top: 11px; width: 3px; height: 617px; background: #dcdae0; border-radius: 2px; }

.events { padding: 10.500px 9px 0 39px; position: relative; }
.events h2 { line-height: 22px; height: 20px; color: #3a3942; }
.event { height: 75px; border-bottom: 1px dashed #e6e3ea; display: grid; grid-template-columns: 53px 43px 1620px 278px 1fr; align-items: center; }
.event.first { height: 52px; }
.event.last { height: 76px; border: 0; }
.when { text-align: center; line-height: 16px; font-size: 9.530px; display: flex; flex-direction: column; }
.when b { font-weight: 600; color: #17161f; }
.ev-icon { width: 17px; height: 17px; margin-left: 12px; }
.what { display: flex; flex-direction: column; line-height: 19.200px; white-space: nowrap; padding-top: 1.500px; }
.what b { font-weight: 600; color: #2b2a34; }
.who { align-self: start; display: flex; flex-direction: column; padding-top: 6px; }
.who label { margin-bottom: 2.500px; }
.who .val { height: 24.300px; }
.who .val svg { width: 17px; height: 17px; margin-right: 6px; }
.consumer label { margin-bottom: 8px; }
.last .who { padding-top: 7.500px; }
.last .who label { margin-bottom: 1px; }
.last .consumer label { margin-bottom: 6.500px; }
.toggle { position: absolute; left: 35px; top: 231px; width: 92px; height: 20px; border-radius: 9px; background: #050214; color: #fff; font-size: 9.530px; font-weight: 600; display: flex; align-items: center; justify-content: center; gap: 7px; }

.graph { flex: 1; position: relative; }
.graph::before { content: ""; position: absolute; inset: 14px 14px 0 28px; background-image: radial-gradient(circle, #e3e0e5 1.200px, transparent 1.800px); background-size: 24.220px 24.220px; }
.graph-canvas { width: 2343px; height: 402px; position: relative; }
.edges path { fill: none; stroke: #446690; stroke-width: 1.400; }
.edge-labels rect { fill: #faf8fc; }
.edge-labels text { font: 6.500px "Liberation Sans", sans-serif; fill: #4c6a90; text-anchor: middle; }
.tag rect { fill: #f0c4c0; }
.tag text { font: 500 7.200px "Liberation Sans", sans-serif; fill: #b04a42; text-anchor: middle; }
.node-labels text { font: bold 9.050px "Liberation Sans", sans-serif; fill: #1c1b22; text-anchor: middle; }
.node-labels .small { font: 7.830px "Liberation Sans", sans-serif; }
.node-labels .group { font: 700 10.900px Inter, sans-serif; }
.pill rect { fill: #040308; }
.pill text { font: 8.800px Inter, sans-serif; fill: #e8e8ee; text-anchor: middle; }
.box-title { font: bold 11.200px "Liberation Sans", sans-serif; fill: #1c1b22; }
.mono-labels text { font: 9px "DejaVu Sans Mono", monospace; fill: #17161f; stroke: #17161f; stroke-width: .2; text-anchor: middle; }
.hint { font: 500 11.150px Inter, "DejaVu Sans", sans-serif; fill: #8b8a90; }
.investigate { position: absolute; right: 31px; top: 9px; width: 106px; height: 29.500px; border-radius: 4px; background: #050214; color: #fff; font-size: 10.920px; font-weight: 500; display: flex; align-items: center; justify-content: center; gap: 5px; }
.help { position: absolute; right: 13.500px; bottom: 14px; width: 37px; height: 37px; border-radius: 50%; background: #050214; display: flex; align-items: center; justify-content: center; }
.page-scroll { position: absolute; right: 0; top: 1px; width: 2px; height: 1280px; background: #d9d7dc; }
```
